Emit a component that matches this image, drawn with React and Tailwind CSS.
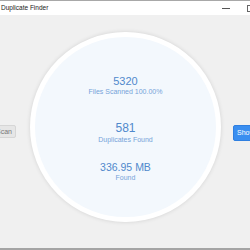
import React from "react";

const Stat = ({ value, label, valueClass, gap }) => (
  <div className={`flex flex-col items-center ${gap}`}>
    <div className={`text-[#5089cc] ${valueClass}`}>{value}</div>
    <div className="text-[7px] leading-[10px] text-[#76a3d9]">{label}</div>
  </div>
);

const App = () => {
  return (
    <div
      className="w-[250px] h-[250px] flex flex-col overflow-hidden bg-[#f0f0f0] border-t border-[#a8a8a8] border-b-2 border-b-[#a4a4a4]"
      style={{ fontFamily: '"Liberation Sans", Arial, sans-serif' }}
    >
      {/* title bar */}
      <div className="h-[14px] shrink-0 bg-white flex items-center justify-between">
        <span className="pl-[1px] text-[6.5px] leading-[14px] text-[#222]">Duplicate Finder</span>
        <div className="flex items-center gap-[17px] -mr-[4px]">
          <div className="w-[8px] h-px bg-[#555]" />
          <div className="w-[7px] h-[7px] border border-[#666]" />
        </div>
      </div>

      {/* main */}
      <div className="flex-1 flex items-start pt-[17px]">
        <button className="shrink-0 -ml-[30px] mt-[93px] w-[46px] h-[13px] bg-[#e6e6e6] border border-[#d6d6d6] rounded-[2px] text-[7px] leading-[11px] text-[#777] text-right pr-[3px]">
          Scan
        </button>

        <div className="shrink-0 ml-[14px] w-[191px] h-[190px] rounded-full border-[5px] border-white bg-[#f3f8fd] shadow-[0_0_4px_rgba(0,0,0,0.12)] flex flex-col items-center pt-[38px]">
          <Stat value="5320" label="Files Scanned 100.00%" valueClass="text-[11px] leading-[12px]" gap="" />
          <Stat value="581" label="Duplicates Found" valueClass="text-[12px] leading-[14px]" gap="mt-[24px]" />
          <Stat value="336.95 MB" label="Found" valueClass="text-[10.5px] leading-[12px]" gap="mt-[16px]" />
        </div>

        <button className="shrink-0 ml-[12px] mt-[93px] w-[50px] h-[16px] bg-[#3a8ef0] border border-[#2f7fe0] rounded-[2px] text-[7px] leading-[14px] text-white text-left pl-[3px]">
          Show
        </button>
      </div>
    </div>
  );
};

export default App;
